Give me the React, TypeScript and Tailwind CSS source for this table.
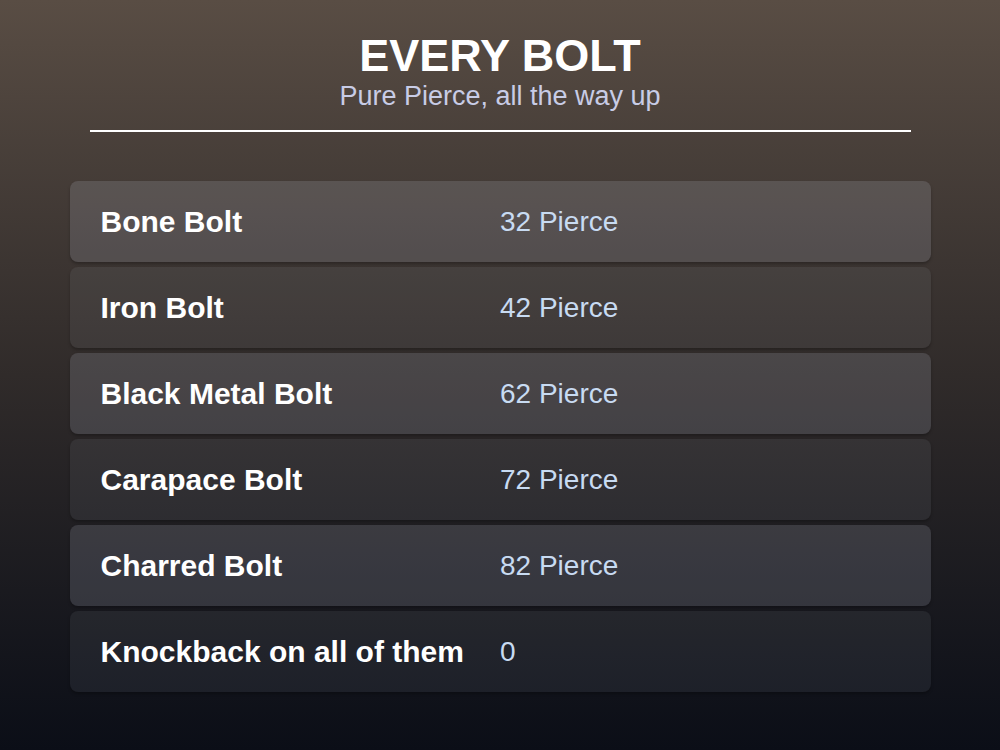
const bolts = [
  { name: "Bone Bolt", value: "32 Pierce" },
  { name: "Iron Bolt", value: "42 Pierce" },
  { name: "Black Metal Bolt", value: "62 Pierce" },
  { name: "Carapace Bolt", value: "72 Pierce" },
  { name: "Charred Bolt", value: "82 Pierce" },
  { name: "Knockback on all of them", value: "0" },
]

export default function App() {
  return (
    <div className="min-h-screen w-full bg-linear-to-b from-[#594d44] via-[#302b2a] to-[#0b0e17] font-['Liberation_Sans',Arial,sans-serif] pt-[33px]">
      {/* Header */}
      <div className="text-center">
        <h1 className="text-[45px] leading-none font-bold text-white">EVERY BOLT</h1>
        <p className="mt-[5px] text-[27px] leading-none text-[#c8cce6]">
          Pure Pierce, all the way up
        </p>
      </div>
      <div className="mx-auto mt-[20px] h-[2px] w-[821px] bg-white"></div>

      {/* Bolt list */}
      <div className="mx-auto mt-[49px] flex w-[861px] flex-col gap-[5px]">
        {bolts.map((b, i) => (
          <div
            key={b.name}
            className={
              i % 2 === 0
                ? "grid h-[81px] grid-cols-2 items-center rounded-lg bg-[#d8dcf0]/[0.15] px-[31px] shadow-[0_2px_3px_rgba(0,0,0,0.25)]"
                : "grid h-[81px] grid-cols-2 items-center rounded-lg bg-[#d8dcf0]/[0.07] px-[31px] shadow-[0_2px_3px_rgba(0,0,0,0.25)]"
            }
          >
            <span className="text-[30px] font-bold text-white">{b.name}</span>
            <span className="text-[28px] text-[#c8dbf2]">{b.value}</span>
          </div>
        ))}
      </div>
    </div>
  )
}
